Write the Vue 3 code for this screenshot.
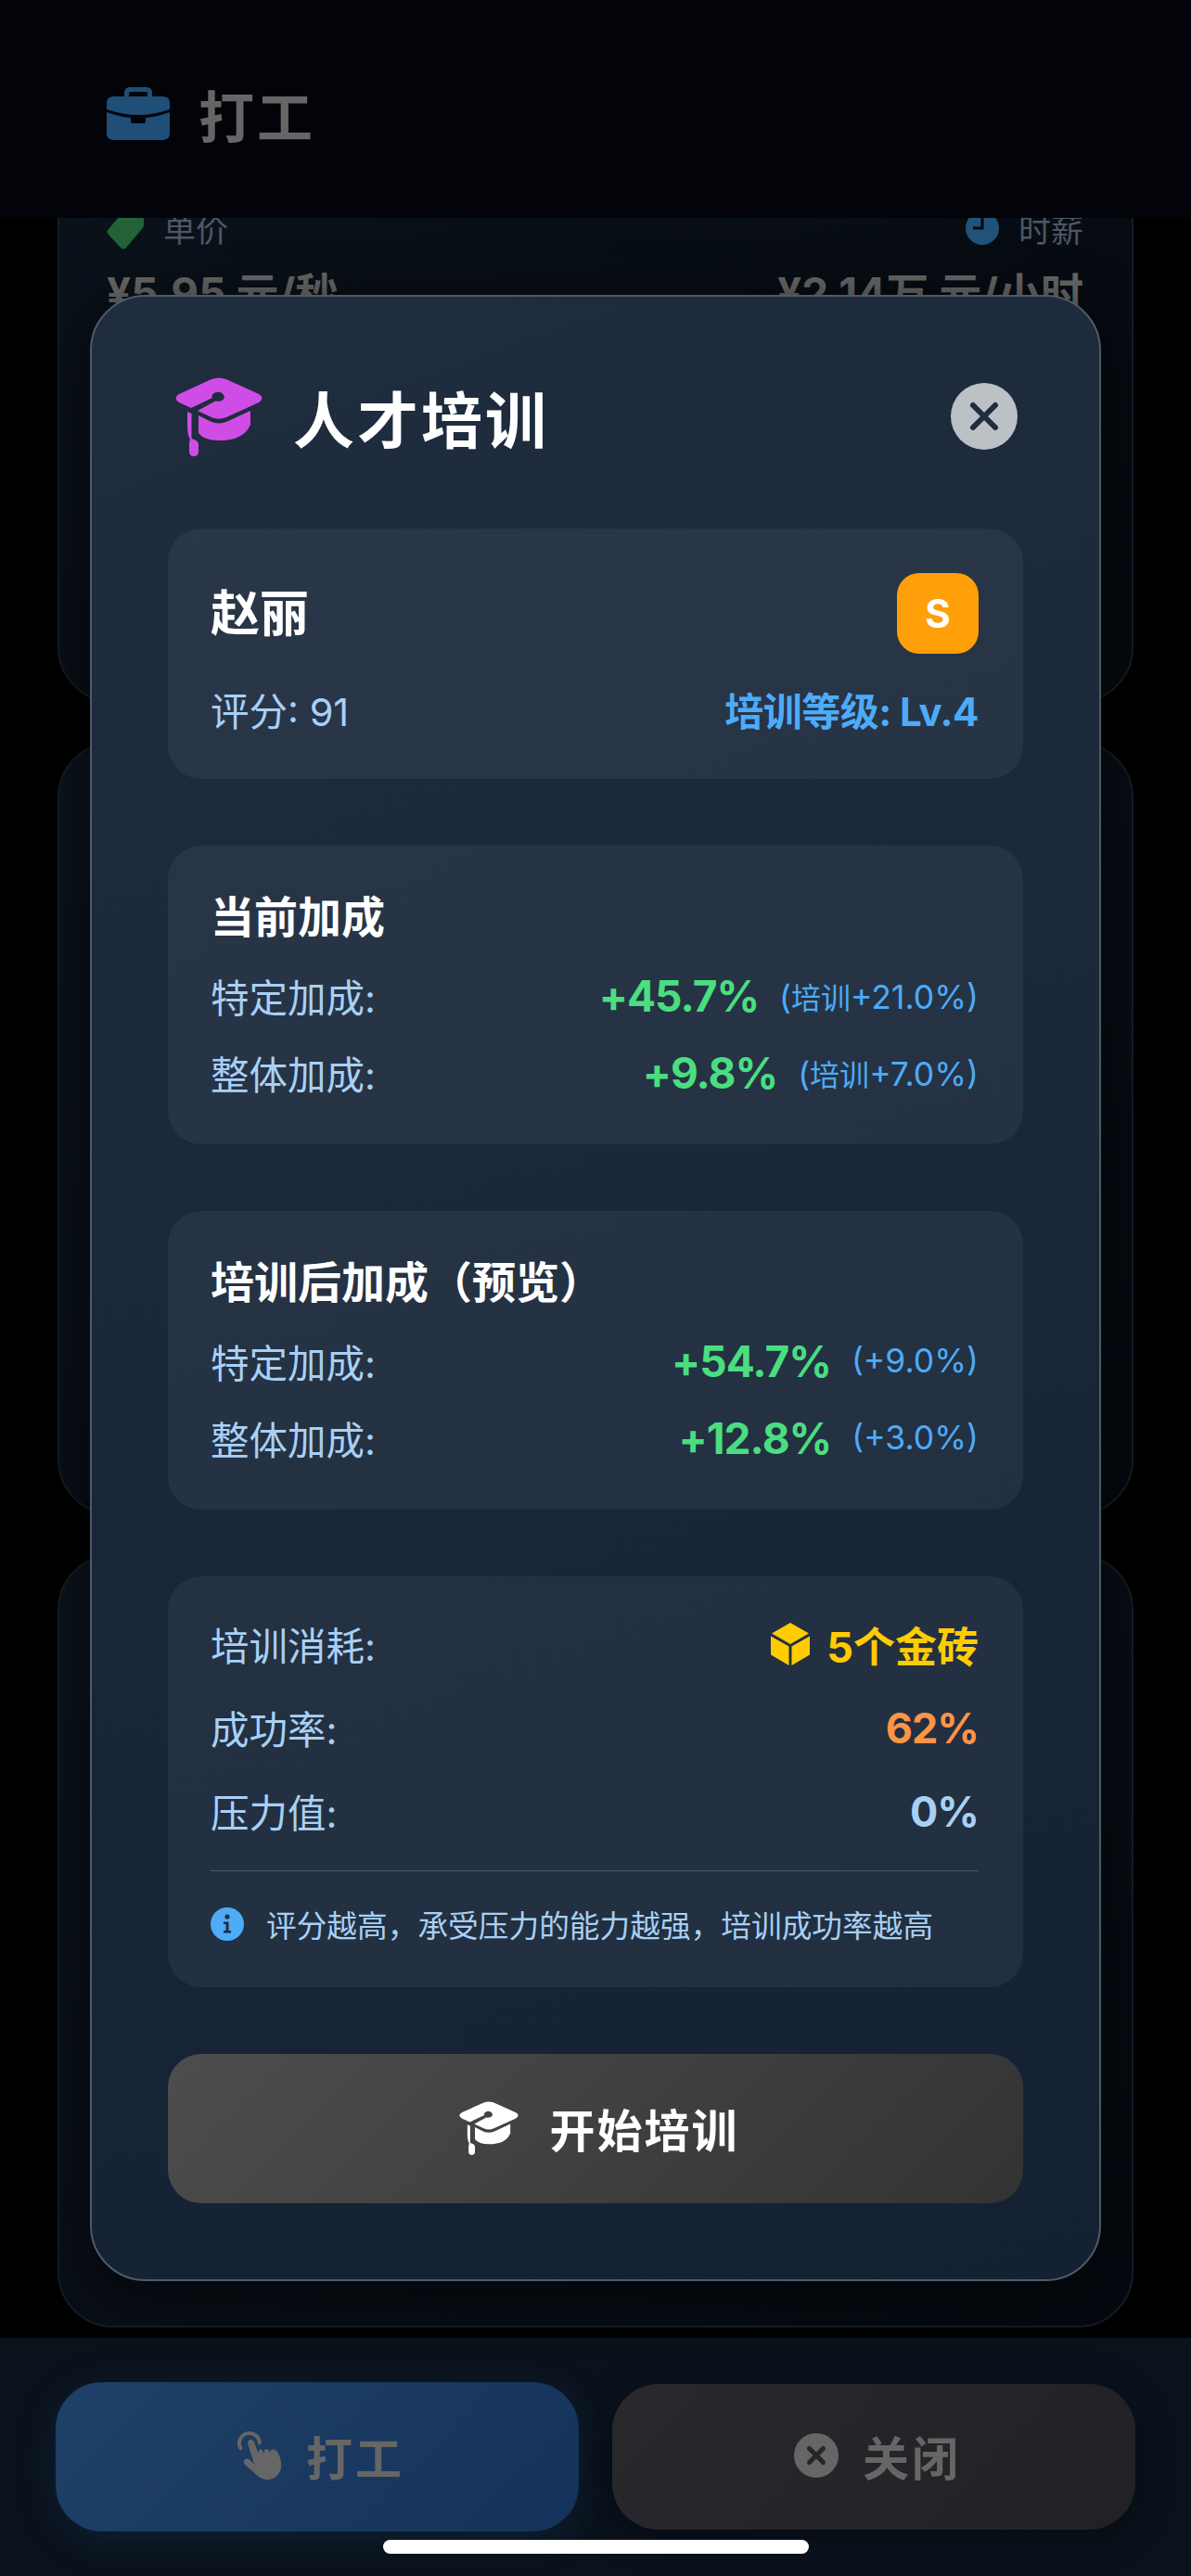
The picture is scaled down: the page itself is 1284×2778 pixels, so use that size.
<script setup>
const stats = [
  { title: '当前加成', rows: [
    { label: '特定加成:', value: '+45.7%', tag: '培训', note: '+21.0%' },
    { label: '整体加成:', value: '+9.8%', tag: '培训', note: '+7.0%' },
  ] },
  { title: '培训后加成（预览）', rows: [
    { label: '特定加成:', value: '+54.7%', tag: '', note: '+9.0%' },
    { label: '整体加成:', value: '+12.8%', tag: '', note: '+3.0%' },
  ] },
]
const capTop = 'M39 2 Q47 -1 55 2 L90 18 Q97 22 90 27 L55 43 Q47 46.500 39 43 L24 36 L43 25.500 Q52 27 53 21 Q51 15 44 16 Q38 18 40 22 L17 33 L4 27 Q-3 22 4 18 Z'
const capBody = 'M25 41 L38 47.500 Q47 51.500 56 47.500 L81 36 L81 51 Q74 68 47 68 Q31 68 25 60 Z'
const capString = 'M13 37 L17.500 39 L17.500 66 Q25 68 25 72 L25 80 Q25 85 20 85 Q15 85 15 80 L15 72 Q15 69 16 67 Q13 62 13 52 Z'
</script>

<template>
  <div class="page">
    <header class="top-bar">
      <svg class="bag" viewBox="0 0 68 57" width="68" height="57">
        <path d="M19 11V6q0-6 6-6h18q6 0 6 6v5h-5V6.500q0-1.500-1.500-1.500h-17Q24 5 24 6.500V11z" fill="#1f4e79"/>
        <path d="M0 17q0-7 8-7h52q8 0 8 7v7Q50 30 34 30T0 24z" fill="#1f4e79"/>
        <path d="M0 27Q14 32 26 33v4q0 2 2 2h12q2 0 2-2v-4Q54 32 68 27v23q0 7-8 7H8q-8 0-8-7z" fill="#1f4e79"/>
      </svg>
      <span class="top-title">打工</span>
    </header>

    <div class="scroller">
      <div class="job-list">
        <section class="job-card first">
          <div class="stat-heads">
            <span class="stat-head">
              <svg viewBox="0 0 40 46" width="40" height="46"><path d="M14 10 L36 -6 Q40 -6 40 -2 V20 Q40 22 38 24 L21 44 Q18 47 15 44 L2 30 Q-1 27 2 24 Z" fill="#236237"/></svg>
              单价
            </span>
            <span class="stat-head">
              <svg viewBox="0 0 36 36" width="36" height="36"><circle cx="18" cy="18" r="18" fill="#215279"/><path d="M18 6v12H8" fill="none" stroke="#05090f" stroke-width="3"/></svg>
              时薪
            </span>
          </div>
          <div class="stat-values">
            <span>¥5.95 元/秒</span>
            <span>¥2.14万 元/小时</span>
          </div>
        </section>
        <section class="job-card"></section>
        <section class="job-card"></section>
      </div>
    </div>

    <footer class="bottom-bar">
      <button class="foot-btn work">
        <svg viewBox="45 35 145 165" width="48" height="55">
          <path d="M55 95A33 33 0 1 1 117 78" fill="none" stroke="#666" stroke-width="12" stroke-linecap="round"/>
          <path d="M78 80Q80 67 90 68Q99 70 101 80L113 112L113 104Q118 94 127 102L131 113L134 100Q141 94 149 104L151 110L155 100Q170 98 178 112Q192 142 186 165Q176 195 145 198Q122 198 105 180L70 150Q60 140 70 131Q78 126 88 136L100 148Z" fill="#666"/>
        </svg>
        <span>打工</span>
      </button>
      <button class="foot-btn close">
        <svg viewBox="0 0 48 48" width="48" height="48">
          <circle cx="24" cy="24" r="24" fill="#666"/>
          <path d="M16.500 16.500l15 15M31.500 16.500l-15 15" stroke="#25252a" stroke-width="5" stroke-linecap="round"/>
        </svg>
        <span>关闭</span>
      </button>
    </footer>

    <div class="scrim">
      <div class="modal">
        <div class="modal-head">
          <svg class="cap" viewBox="0 0 94 85" width="94" height="85">
            <path :d="capTop" fill="#cf4de6"/>
            <path :d="capBody" fill="#cf4de6"/>
            <path :d="capString" fill="#cf4de6"/>
          </svg>
          <h2>人才培训</h2>
          <span class="close-x">
            <svg viewBox="0 0 72 72" width="72" height="72">
              <circle cx="36" cy="36" r="36" fill="#bcc1c6"/>
              <path d="M24 24l24 24M48 24L24 48" stroke="#1f2d3e" stroke-width="6" stroke-linecap="round"/>
            </svg>
          </span>
        </div>

        <section class="panel person">
          <div class="row">
            <span class="name">赵丽</span>
            <span class="rank">S</span>
          </div>
          <div class="row person-sub">
            <span class="label">评分: 91</span>
            <span class="level">培训等级: Lv.4</span>
          </div>
        </section>

        <section v-for="block in stats" :key="block.title" class="panel bonus">
          <div class="bonus-title">{{ block.title }}</div>
          <div v-for="r in block.rows" :key="r.label" class="row bonus-row">
            <span class="label">{{ r.label }}</span>
            <span class="bonus-val">
              <b>{{ r.value }}</b>
              <small>(<i>{{ r.tag }}</i>{{ r.note }})</small>
            </span>
          </div>
        </section>

        <section class="panel cost">
          <div class="row cost-row">
            <span class="label">培训消耗:</span>
            <span class="gold">
              <svg viewBox="0 0 42 46" width="42" height="46">
                <path d="M21 0L41 11.500L21 23L1 11.500Z" fill="#ffcc00"/>
                <path d="M0 14.500L19.500 25.500V46L0 34.500Z" fill="#ffcc00"/>
                <path d="M42 14.500L22.500 25.500V46L42 34.500Z" fill="#ffcc00"/>
              </svg>
              5个金砖
            </span>
          </div>
          <div class="row cost-row">
            <span class="label">成功率:</span>
            <span class="rate">62%</span>
          </div>
          <div class="row cost-row">
            <span class="label">压力值:</span>
            <span class="stress">0%</span>
          </div>
          <div class="tip">
            <svg viewBox="0 0 36 36" width="36" height="36">
              <circle cx="18" cy="18" r="18" fill="#4dabf7"/>
              <circle cx="18" cy="10" r="2.600" fill="#1f2d3e"/>
              <path d="M14 15.500h5.500V25H22v2.500h-8V25h2.500v-7H14z" fill="#1f2d3e"/>
            </svg>
            <span>评分越高，承受压力的能力越强，培训成功率越高</span>
          </div>
        </section>

        <button class="start">
          <svg viewBox="0 0 94 85" width="64" height="58">
            <path :d="capTop" fill="#fff"/>
            <path :d="capBody" fill="#fff"/>
            <path :d="capString" fill="#fff"/>
          </svg>
          <span>开始培训</span>
        </button>
      </div>
    </div>

    <div class="home-bar"></div>
  </div>
</template>

<style>
html, body { margin: 0; background: #000; }
</style>

<style scoped>
.page {
  position: relative;
  width: 1284px;
  height: 2778px;
  overflow: hidden;
  display: flex;
  flex-direction: column;
  background: #000;
  font-family: Inter, "Noto Sans CJK SC", sans-serif;
  color: #fff;
}

.top-bar {
  height: 235px;
  flex: none;
  box-sizing: border-box;
  padding: 10px 0 0 115px;
  display: flex;
  align-items: center;
  gap: 31px;
  background: #020409;
}
.top-title {
  font-size: 60px;
  font-weight: 700;
  letter-spacing: 3px;
  color: #666;
}

.scroller {
  flex: 1;
  min-height: 0;
  overflow: hidden;
}
.job-list {
  margin: -311px 62px 0;
  display: flex;
  flex-direction: column;
  gap: 42px;
}
.job-card {
  height: 834px;
  box-sizing: border-box;
  padding: 294px 52px 0 51px;
  border: 2px solid #161c24;
  border-radius: 60px;
  background: linear-gradient(135deg, #0c131c, #05090f);
}
.stat-heads, .stat-values {
  display: flex;
  justify-content: space-between;
}
.stat-head {
  display: flex;
  align-items: center;
  gap: 21px;
  font-size: 35px;
  color: #4e5763;
}
.stat-values {
  margin-top: 9px;
  font-size: 46px;
  font-weight: 700;
  color: #666;
}

.bottom-bar {
  height: 257px;
  flex: none;
  box-sizing: border-box;
  padding: 48px 60px 0;
  display: flex;
  gap: 36px;
  align-items: flex-start;
  background: #0a121c;
}
.foot-btn {
  flex: 1;
  box-sizing: border-box;
  padding: 0 0 4px 8px;
  border: none;
  border-radius: 50px;
  display: flex;
  align-items: center;
  justify-content: center;
  gap: 26px;
  font: 700 50px Inter, "Noto Sans CJK SC", sans-serif;
  letter-spacing: 3px;
  color: #666;
}
.foot-btn.work {
  height: 161px;
  background: linear-gradient(135deg, #1f4068, #14335a);
  box-shadow: 0 8px 40px rgba(30, 64, 104, .3);
}
.foot-btn.close {
  height: 157px;
  margin-top: 2px;
  background: linear-gradient(135deg, #29292d, #212125);
  box-shadow: 0 8px 40px rgba(0, 0, 0, .4);
}

.scrim {
  position: absolute;
  inset: 0;
  display: flex;
  align-items: center;
  justify-content: center;
}
.modal {
  width: 1090px;
  height: 2142px;
  box-sizing: border-box;
  padding: 84px 82px 0;
  border: 2px solid #4d5a69;
  border-radius: 60px;
  background: linear-gradient(160deg, #1f2d3f, #132133);
  box-shadow: 0 12px 60px rgba(0, 0, 0, .6);
  display: flex;
  flex-direction: column;
}
.modal-head {
  height: 90px;
  margin-bottom: 76px;
  display: flex;
  align-items: center;
}
.cap { margin-left: 8px; }
.modal-head h2 {
  margin: 0 0 0 33px;
  font-size: 66px;
  font-weight: 700;
  letter-spacing: 3px;
}
.close-x {
  margin-left: auto;
  margin-right: 6px;
  display: flex;
}

.panel {
  box-sizing: border-box;
  margin-bottom: 72px;
  padding: 0 48px 0 46px;
  border-radius: 36px;
  background: rgba(255, 255, 255, .055);
}
.row {
  display: flex;
  justify-content: space-between;
  align-items: center;
}
.label {
  font-size: 41.500px;
  color: #a8d0f5;
}
.person { height: 270px; padding-top: 48px; }
.name { font-size: 53px; font-weight: 700; padding-bottom: 7px; }
.rank {
  width: 88px;
  height: 87px;
  border-radius: 24px;
  background: #ff9f0a;
  display: flex;
  align-items: center;
  justify-content: center;
  font-size: 42px;
  font-weight: 700;
}
.person-sub { margin-top: 29px; }
.level { font-size: 42px; font-weight: 700; letter-spacing: -.5px; color: #4dabf7; }

.bonus { height: 322px; padding-top: 44px; }
.bonus-title { font-size: 47px; font-weight: 700; line-height: 66px; margin-bottom: 10px; }
.bonus-row { height: 83px; }
.bonus-val { display: flex; align-items: center; gap: 22px; }
.bonus-val b { font-size: 46px; font-weight: 700; letter-spacing: -1px; color: #4ade80; }
.bonus-val small { font-size: 35.500px; color: #4dabf7; }
.bonus-val i { font-size: 32px; font-style: normal; }

.cost { height: 443px; padding-top: 28px; }
.cost-row { height: 90px; }
.gold {
  display: flex;
  align-items: center;
  gap: 18px;
  font-size: 45px;
  font-weight: 700;
  color: #ffcc00;
}
.rate { font-size: 45px; font-weight: 700; letter-spacing: -1px; color: #ff9447; }
.stress { font-size: 45px; font-weight: 700; letter-spacing: -1px; color: #a8d0f5; }
.tip {
  margin-top: 19px;
  padding-top: 33px;
  border-top: 1px solid rgba(255, 255, 255, .2);
  display: flex;
  align-items: center;
  gap: 24px;
  font-size: 32.700px;
  color: #a8d0f5;
}

.start {
  height: 161px;
  flex: none;
  box-sizing: border-box;
  padding: 0 0 2px 8px;
  border: none;
  border-radius: 36px;
  background: linear-gradient(135deg, #4d4d4d, #333);
  display: flex;
  align-items: center;
  justify-content: center;
  gap: 33px;
  font: 700 49px Inter, "Noto Sans CJK SC", sans-serif;
  letter-spacing: 2px;
  color: #fff;
}

.home-bar {
  position: absolute;
  left: 413px;
  top: 2739px;
  width: 459px;
  height: 15px;
  border-radius: 8px;
  background: #fff;
}
</style>
